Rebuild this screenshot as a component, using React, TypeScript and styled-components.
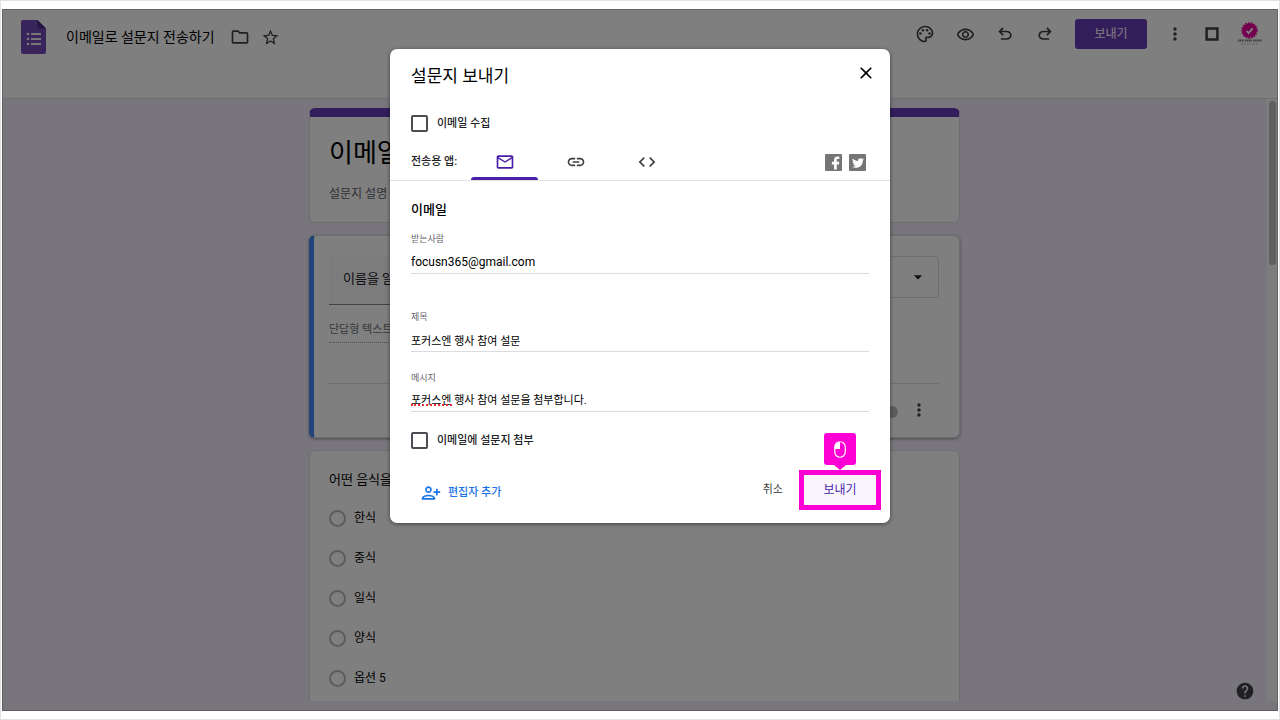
import React, { ReactNode, useState } from "react";
import styled, { createGlobalStyle } from "styled-components";
import {
  MdArrowDropDown,
  MdClose,
  MdCode,
  MdHelp,
  MdLink,
  MdMoreVert,
  MdOutlineEmail,
  MdOutlinePalette,
  MdOutlineRemoveRedEye,
  MdStarBorder,
} from "react-icons/md";
import { FaTwitter } from "react-icons/fa";

const color = {
  purple: "#673ab7",
  purpleDark: "#4a1fa8",
  ink: "#202124",
  grey: "#5f6368",
  line: "#dadce0",
  canvas: "#f0ebf8",
  blue: "#1a73e8",
  marker: "#ff00d4",
};

const GlobalStyle = createGlobalStyle`
  *, *::before, *::after { box-sizing: border-box; }
  body {
    margin: 0;
    background: #fff;
    color: ${color.ink};
    font-family: Roboto, "Noto Sans CJK KR", sans-serif;
    font-size: 12px;
    line-height: 16px;
  }
  button, input, select { font: inherit; color: inherit; }
  h1, h2, h3, p, fieldset, ul { margin: 0; padding: 0; border: 0; }
`;

const Page = styled.div`
  display: flex;
  height: 100vh;
  padding: 8px 1px;
  border: 1px solid #e2e2e2;
`;

const Frame = styled.div`
  position: relative;
  flex: 1;
  display: flex;
  flex-direction: column;
  min-width: 0;
  padding-bottom: 10px;
  background: ${color.canvas};
  overflow: hidden;
`;

/* ---------- top bar ---------- */

const TopBar = styled.header`
  display: flex;
  justify-content: space-between;
  align-items: flex-start;
  flex: none;
  height: 90px;
  padding: 10px 15px 0 19px;
  background: #fff;
  border-bottom: 1px solid ${color.line};
`;

const BarGroup = styled.div<{ $gap: number }>`
  display: flex;
  align-items: center;
  gap: ${(p) => p.$gap}px;
`;

const DocGroup = styled(BarGroup)`
  padding-top: 1px;
`;

const AccountGroup = styled(BarGroup)`
  margin-left: -3px;
`;

const DocTitle = styled.h1`
  margin: 0 4px 0 8px;
  font-size: 14px;
  font-weight: 400;
  line-height: 20px;
  color: #000;
`;

const IconButton = styled.button`
  display: flex;
  align-items: center;
  justify-content: center;
  width: 20px;
  height: 20px;
  padding: 0;
  border: 0;
  background: none;
  color: #3c4043;
  cursor: pointer;
`;

const PublishButton = styled.button`
  width: 72px;
  height: 30px;
  padding: 0;
  border: 0;
  border-radius: 3px;
  margin-right: -2px;
  background: ${color.purple};
  color: #fff;
`;

/* ---------- form canvas ---------- */

const Body = styled.div`
  display: flex;
  flex: 1;
  min-height: 0;
`;

const Scroller = styled.main`
  flex: 1;
  min-width: 0;
  padding-top: 9px;
  overflow: hidden;
`;

const Column = styled.div`
  display: flex;
  flex-direction: column;
  gap: 12px;
  width: 100%;
  max-width: 651px;
  margin: 0 auto;
`;

const ScrollTrack = styled.div`
  flex: none;
  width: 11px;
  padding: 2px;
  background: #fafafa;
`;

const ScrollThumb = styled.div`
  height: 164px;
  border-radius: 4px;
  background: #c1c1c1;
`;

const Card = styled.section`
  padding: 0 20px 0 19px;
  border: 1px solid ${color.line};
  border-radius: 6px;
  background: #fff;
`;

const TitleCard = styled(Card)`
  height: 115px;
  padding-top: 18px;
  border-top: 9px solid ${color.purple};
`;

const FormTitle = styled.h2`
  font-size: 26px;
  font-weight: 400;
  line-height: 36px;
  color: #000;
`;

const FormDescription = styled.p`
  margin-top: 14px;
  line-height: 18px;
  color: ${color.grey};
`;

const QuestionCard = styled(Card)`
  height: 203px;
  padding: 20px 20px 0 15px;
  border-left: 5px solid #4285f4;
  box-shadow: 0 1px 3px rgba(0, 0, 0, 0.4);
`;

const QuestionRow = styled.div`
  display: flex;
  align-items: flex-start;
  justify-content: space-between;
`;

const QuestionInput = styled.input`
  width: 360px;
  height: 49px;
  padding: 0 14px 6px;
  border: 0;
  border-bottom: 1px solid #80868b;
  background: #f8f9fa;
  font-size: 13px;
`;

const TypeBox = styled.div`
  display: flex;
  align-items: center;
  width: 170px;
  height: 42px;
  padding-right: 10px;
  border: 1px solid ${color.line};
  border-radius: 3px;
`;

const TypeSelect = styled.select`
  flex: 1;
  min-width: 0;
  border: 0;
  appearance: none;
  background: none;
  padding: 0 12px;
`;

const ShortAnswer = styled.p`
  width: 304px;
  margin-top: 17px;
  padding-bottom: 4px;
  border-bottom: 1px dotted #9aa0a6;
  font-size: 11px;
  line-height: 16px;
  color: #70757a;
`;

const QuestionFooter = styled.div`
  display: flex;
  align-items: center;
  justify-content: flex-end;
  gap: 11px;
  height: 52px;
  margin-top: 40px;
  padding-right: 10px;
  border-top: 1px solid ${color.line};
`;

const Switch = styled.input`
  appearance: none;
  width: 28px;
  height: 12px;
  margin: 4px 0 0;
  border-radius: 6px;
  background: #b9b9b9;
`;

const ChoiceCard = styled(Card)`
  padding-top: 19px;
  height: 300px;
`;

const ChoiceTitle = styled.h3`
  font-size: 13px;
  font-weight: 400;
  line-height: 20px;
  color: #000;
`;

const Choices = styled.fieldset`
  display: flex;
  flex-direction: column;
  gap: 20px;
  margin-top: 18px;
`;

const Choice = styled.label`
  display: flex;
  align-items: center;
  gap: 8px;
  height: 20px;
  color: #000;
`;

const Radio = styled.input`
  appearance: none;
  width: 17px;
  height: 17px;
  margin: 0;
  border: 2px solid #b5b8bb;
  border-radius: 50%;
`;

const HelpSpot = styled.div`
  position: absolute;
  right: 23px;
  bottom: 10px;
`;

/* ---------- dialog ---------- */

const Scrim = styled.div`
  position: absolute;
  inset: 0;
  display: flex;
  justify-content: center;
  align-items: flex-start;
  padding-top: 40px;
  background: rgba(0, 0, 0, 0.5);
  box-shadow: inset 0 0 0 1px rgba(0, 0, 0, 0.2);
`;

const Dialog = styled.div`
  width: 500px;
  max-width: 100%;
  border-radius: 7px;
  background: #fff;
  box-shadow: 0 1px 4px rgba(0, 0, 0, 0.5);
`;

const DialogHead = styled.div`
  display: flex;
  align-items: flex-start;
  justify-content: space-between;
  padding: 14px 14px 0 21px;
`;

const DialogTitle = styled.h2`
  font-size: 17px;
  font-weight: 400;
  line-height: 26px;
  color: #000;
`;

const CheckLabel = styled.label<{ $top: number }>`
  display: flex;
  align-items: center;
  gap: 9px;
  margin-top: ${(p) => p.$top}px;
  padding: 0 21px;
  font-size: 11px;
  font-weight: 500;
`;

const CheckBox = styled.input`
  appearance: none;
  width: 17px;
  height: 17px;
  margin: 0;
  border: 2px solid #4a4e52;
  border-radius: 2px;
`;

const TabBar = styled.div`
  display: flex;
  align-items: center;
  height: 38px;
  margin-top: 11px;
  padding: 0 24px 0 21px;
  border-bottom: 1px solid #e0e0e0;
  font-size: 11px;
  font-weight: 500;
`;

const TabList = styled.div`
  display: flex;
  align-self: stretch;
  gap: 4px;
  flex: 1;
  margin-left: 14px;
`;

const Tab = styled.button<{ $active: boolean }>`
  display: flex;
  align-items: center;
  justify-content: center;
  width: 67px;
  padding: 1px 0 0;
  border: 0;
  background: none;
  color: ${(p) => (p.$active ? color.purpleDark : "#3c4043")};
  position: relative;

  &::after {
    content: "";
    position: absolute;
    left: 0;
    right: 0;
    bottom: 0;
    height: 3px;
    border-radius: 3px 3px 0 0;
    background: ${(p) => (p.$active ? color.purpleDark : "transparent")};
  }
`;

const Socials = styled.div`
  display: flex;
  gap: 7px;
  padding-top: 2px;
`;

const SocialLink = styled.a`
  display: flex;
  align-items: center;
  justify-content: center;
  width: 17px;
  height: 17px;
  border-radius: 1px;
  background: #757575;
  color: #fff;
`;

const MailForm = styled.div`
  display: flex;
  flex-direction: column;
  padding: 19px 21px 0;
`;

const MailHeading = styled.h3`
  font-size: 13px;
  font-weight: 500;
  line-height: 20px;
  color: #000;
`;

const Field = styled.div<{ $top: number }>`
  position: relative;
  display: flex;
  flex-direction: column;
  margin-top: ${(p) => p.$top}px;
`;

const FieldLabel = styled.label`
  font-size: 9px;
  line-height: 12px;
  color: ${color.grey};
`;

const FieldInput = styled.input<{ $size?: number; $height: number }>`
  width: 100%;
  height: ${(p) => p.$height}px;
  padding: ${(p) => (p.$height > 28 ? 5 : 2)}px 0 0;
  border: 0;
  border-bottom: 1px solid ${color.line};
  background: none;
  font-size: ${(p) => p.$size ?? 11}px;
  color: #000;
  outline: none;
`;

const SpellMark = styled.span`
  position: absolute;
  left: 0;
  bottom: 6px;
  width: 41px;
  border-bottom: 2px dotted #e8303a;
`;

const DialogFoot = styled.div`
  display: flex;
  align-items: center;
  padding: 26px 14px 18px 31px;
  font-size: 11px;
`;

const AddEditor = styled.button`
  display: flex;
  align-items: center;
  gap: 7px;
  padding: 5px 0 0;
  border: 0;
  background: none;
  color: ${color.blue};
  font-weight: 500;
`;

const CancelButton = styled.button`
  margin: 0 21px 0 auto;
  padding: 0;
  border: 0;
  background: none;
  color: #3c4043;
`;

const SendSpot = styled.div`
  position: relative;
  display: flex;
`;

const SendButton = styled.button`
  width: 72px;
  height: 30px;
  padding: 0;
  border: 0;
  background: #f8f5fd;
  box-shadow: 0 0 0 5px ${color.marker};
  color: ${color.purpleDark};
  font-size: 12px;
`;

const Callout = styled.div`
  position: absolute;
  left: 50%;
  bottom: calc(100% + 10px);
  display: flex;
  align-items: center;
  justify-content: center;
  width: 32px;
  height: 32px;
  margin-left: -16px;
  border-radius: 3px;
  background: ${color.marker};

  &::after {
    content: "";
    position: absolute;
    top: 100%;
    left: 10px;
    border: 6px solid transparent;
    border-bottom: 0;
    border-top: 5px solid ${color.marker};
  }
`;

/* ---------- drawings ---------- */

type GlyphProps = { d: string; size: number };
const Glyph = ({ d, size }: GlyphProps) => (
  <svg width={size} height={size} viewBox="0 0 24 24" fill="currentColor" aria-hidden="true">
    <path d={d} />
  </svg>
);

const paths = {
  folder: "M9.2 6l2 2H20v10H4V6h5.200M10 4H4c-1.100 0-2 .9-2 2v12c0 1.100.9 2 2 2h16c1.100 0 2-.9 2-2V8c0-1.100-.9-2-2-2h-8l-2-2z",
  undo: "M7 19v-2h7.100q1.575 0 2.738-1T18 13.500 16.837 11 14.100 10H7.800l2.600 2.600L9 14 4 9l5-5 1.400 1.400L7.800 8h6.300q2.425 0 4.163 1.575T20 13.500t-1.737 3.925T14.100 19z",
  redo: "M17 19v-2H9.900q-1.575 0-2.738-1T6 13.500 7.163 11 9.900 10h6.300l-2.600 2.600L15 14l5-5-5-5-1.400 1.400L16.200 8H9.900Q7.475 8 5.737 9.575T4 13.500t1.737 3.925T9.900 19z",
  square: "M4 4h16v16H4zM7 7v10h10V7z",
  personAdd:
    "M13 8c0-2.210-1.790-4-4-4S5 5.790 5 8s1.790 4 4 4 4-1.790 4-4zm-2 0c0 1.100-.9 2-2 2s-2-.9-2-2 .9-2 2-2 2 .9 2 2zM1 18v2h16v-2c0-2.660-5.330-4-8-4s-8 1.340-8 4zm2 0c.2-.71 3.300-2 6-2 2.690 0 5.780 1.280 6 2H3zm17-3v-3h3v-2h-3V7h-2v3h-3v2h3v3h2z",
  facebook:
    "M16.560 22V14.706H19.680L20.145 11.076H16.560V8.777c0-1.050.292-1.771 1.792-1.771h1.921v-3.240c-.332-.044-1.471-.141-2.796-.141-2.765 0-4.659 1.686-4.659 4.785v2.675H9.689v3.621h3.129V22z",
};

const SquareGlyph = () => (
  <svg width="20" height="20" viewBox="0 0 24 24" fill="currentColor" fillRule="evenodd" aria-hidden="true">
    <path d={paths.square} />
  </svg>
);

const FormsLogo = () => (
  <svg width="26" height="34" viewBox="0 0 26 34" aria-hidden="true">
    <path d="M2 0h14.500L25 8.500V32a2 2 0 0 1-2 2H2a2 2 0 0 1-2-2V2a2 2 0 0 1 2-2z" fill="#7248b9" />
    <path d="M16.500 0L25 8.500h-8.500z" fill="#4a2a85" />
    <g fill="#f1f1f1">
      <rect x="10" y="13" width="10" height="2" />
      <rect x="10" y="18" width="10" height="2" />
      <rect x="10" y="23" width="10" height="2" />
      <circle cx="7" cy="14" r="1.300" />
      <circle cx="7" cy="19" r="1.300" />
      <circle cx="7" cy="24" r="1.300" />
    </g>
  </svg>
);

const BadgeAvatar = () => (
  <svg width="26" height="24" viewBox="0 0 26 24" role="img" aria-label="프로필">
    <circle cx="12.500" cy="8.500" r="7.300" fill="#e6009f" />
    <circle cx="12.500" cy="8.500" r="7.500" fill="none" stroke="#e6009f" strokeWidth="1.500" strokeDasharray="1.700 1.100" />
    <path d="M9.500 8.800l2.200 2.300 4-5" fill="none" stroke="#fff" strokeWidth="1.800" />
    <path d="M1 18.500h6M8 18.500h7M16 18.500h9" stroke="#777" strokeWidth="2" strokeDasharray="1.500 .6" />
    <path d="M4 22h18" stroke="#bbb" strokeWidth="1" strokeDasharray="2 1" />
  </svg>
);

const MouseGlyph = () => (
  <svg width="12" height="17" viewBox="0 0 12 17" aria-hidden="true">
    <rect x="0.750" y="0.750" width="10.500" height="15.500" rx="5.250" fill="none" stroke="#fff" strokeWidth="1.200" />
    <path d="M6 1v7H1V6a5 5 0 0 1 5-5z" fill="#fff" />
  </svg>
);

/* ---------- screen ---------- */

const options = ["한식", "중식", "일식", "양식", "옵션 5"];

const tabs: { id: string; label: string; icon: ReactNode }[] = [
  { id: "email", label: "이메일", icon: <MdOutlineEmail size={20} /> },
  { id: "link", label: "링크", icon: <MdLink size={20} /> },
  { id: "embed", label: "HTML 삽입", icon: <MdCode size={20} /> },
];

export default function App() {
  const [tab, setTab] = useState("email");

  return (
    <>
      <GlobalStyle />
      <Page>
        <Frame>
          <TopBar>
            <DocGroup $gap={11}>
              <FormsLogo />
              <DocTitle>이메일로 설문지 전송하기</DocTitle>
              <IconButton aria-label="폴더로 이동"><Glyph d={paths.folder} size={20} /></IconButton>
              <IconButton aria-label="별표"><MdStarBorder size={19} /></IconButton>
            </DocGroup>
            <BarGroup $gap={20}>
              <IconButton aria-label="테마"><MdOutlinePalette size={20} /></IconButton>
              <IconButton aria-label="미리보기"><MdOutlineRemoveRedEye size={19} /></IconButton>
              <IconButton aria-label="실행취소"><Glyph d={paths.undo} size={20} /></IconButton>
              <IconButton aria-label="재실행"><Glyph d={paths.redo} size={20} /></IconButton>
              <PublishButton>보내기</PublishButton>
              <IconButton aria-label="더보기"><MdMoreVert size={20} /></IconButton>
              <AccountGroup $gap={15}>
                <IconButton aria-label="앱"><SquareGlyph /></IconButton>
                <BadgeAvatar />
              </AccountGroup>
            </BarGroup>
          </TopBar>

          <Body>
            <Scroller>
              <Column>
                <TitleCard>
                  <FormTitle>이메일로 설문지 전송하기</FormTitle>
                  <FormDescription>설문지 설명</FormDescription>
                </TitleCard>

                <QuestionCard>
                  <QuestionRow>
                    <QuestionInput aria-label="질문" defaultValue="이름을 알려주세요." />
                    <TypeBox>
                      <TypeSelect aria-label="질문 유형"><option>단답형</option></TypeSelect>
                      <MdArrowDropDown size={20} />
                    </TypeBox>
                  </QuestionRow>
                  <ShortAnswer>단답형 텍스트</ShortAnswer>
                  <QuestionFooter>
                    <Switch type="checkbox" aria-label="필수" />
                    <IconButton aria-label="질문 옵션"><MdMoreVert size={20} /></IconButton>
                  </QuestionFooter>
                </QuestionCard>

                <ChoiceCard>
                  <ChoiceTitle>어떤 음식을 좋아하세요?</ChoiceTitle>
                  <Choices>
                    {options.map((o) => (
                      <Choice key={o}>
                        <Radio type="radio" name="food" />
                        {o}
                      </Choice>
                    ))}
                  </Choices>
                </ChoiceCard>
              </Column>
            </Scroller>
            <ScrollTrack><ScrollThumb /></ScrollTrack>
          </Body>

          <HelpSpot>
            <IconButton aria-label="도움말"><MdHelp size={20} /></IconButton>
          </HelpSpot>

          <Scrim>
            <Dialog role="dialog" aria-label="설문지 보내기">
              <DialogHead>
                <DialogTitle>설문지 보내기</DialogTitle>
                <IconButton aria-label="닫기"><MdClose size={20} color="#000" /></IconButton>
              </DialogHead>
              <CheckLabel $top={26}>
                <CheckBox type="checkbox" />
                이메일 수집
              </CheckLabel>
              <TabBar>
                <span>전송용 앱:</span>
                <TabList role="tablist">
                  {tabs.map((t) => (
                    <Tab
                      key={t.id}
                      role="tab"
                      aria-label={t.label}
                      aria-selected={tab === t.id}
                      $active={tab === t.id}
                      onClick={() => setTab(t.id)}
                    >
                      {t.icon}
                    </Tab>
                  ))}
                </TabList>
                <Socials>
                  <SocialLink href="#facebook" aria-label="Facebook"><Glyph d={paths.facebook} size={17} /></SocialLink>
                  <SocialLink href="#twitter" aria-label="Twitter"><FaTwitter size={12} /></SocialLink>
                </Socials>
              </TabBar>
              <MailForm>
                <MailHeading>이메일</MailHeading>
                <Field $top={13}>
                  <FieldLabel htmlFor="to">받는사람</FieldLabel>
                  <FieldInput id="to" $size={12} $height={29} defaultValue="focusn365@gmail.com" />
                </Field>
                <Field $top={37}>
                  <FieldLabel htmlFor="subject">제목</FieldLabel>
                  <FieldInput id="subject" $height={29} defaultValue="포커스엔 행사 참여 설문" />
                </Field>
                <Field $top={20}>
                  <FieldLabel htmlFor="message">메시지</FieldLabel>
                  <FieldInput id="message" $height={28} defaultValue="포커스엔 행사 참여 설문을 첨부합니다." />
                  <SpellMark />
                </Field>
              </MailForm>
              <CheckLabel $top={20}>
                <CheckBox type="checkbox" />
                이메일에 설문지 첨부
              </CheckLabel>
              <DialogFoot>
                <AddEditor><Glyph d={paths.personAdd} size={20} />편집자 추가</AddEditor>
                <CancelButton>취소</CancelButton>
                <SendSpot>
                  <SendButton>보내기</SendButton>
                  <Callout><MouseGlyph /></Callout>
                </SendSpot>
              </DialogFoot>
            </Dialog>
          </Scrim>
        </Frame>
      </Page>
    </>
  );
}
